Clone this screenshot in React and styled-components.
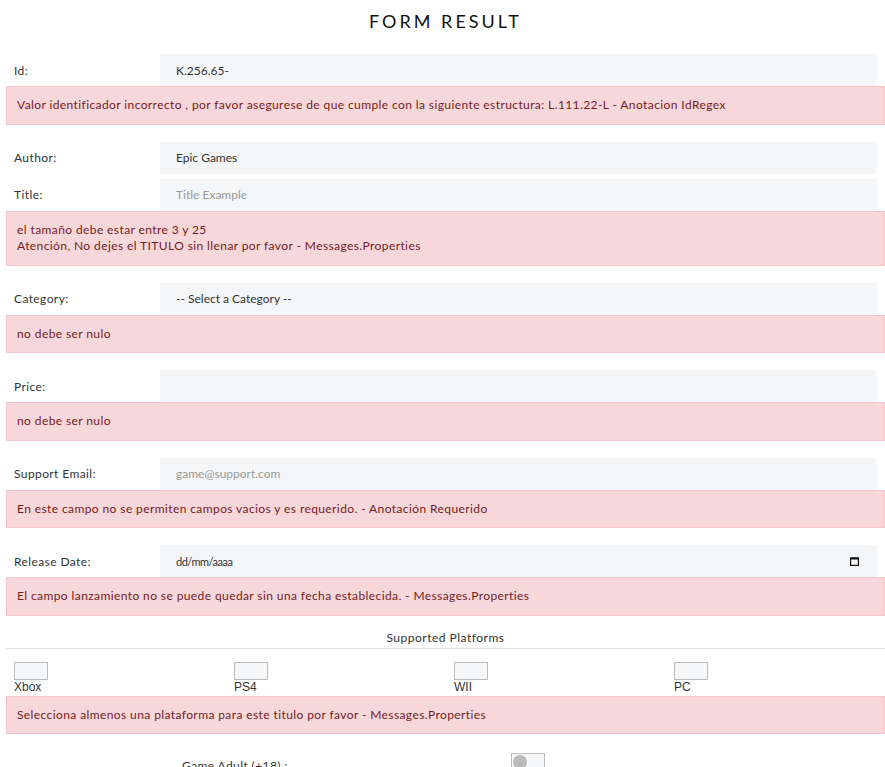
import React from "react";
import styled, { createGlobalStyle } from "styled-components";

const GlobalStyle = createGlobalStyle`
  body {
    margin: 0;
    background: #fff;
    font-family: Lato, "Noto Sans", sans-serif;
    color: #333;
  }
`;

const Page = styled.div`
  padding: 0 0 0 6px;
  overflow: hidden;
`;

const Title = styled.h1`
  margin: 0;
  padding: 9px 0 21px;
  text-align: center;
  font-size: 18px;
  font-weight: 400;
  letter-spacing: 3px;
  color: #111;
  line-height: 24px;
`;

const Row = styled.div`
  display: flex;
  align-items: center;
  height: 32px;
  padding-right: 8px;
  margin-top: ${(p) => p.$gap || 0}px;
`;

const Label = styled.label`
  width: 146px;
  padding-left: 8px;
  font-size: 12px;
  letter-spacing: 0.4px;
`;

const fieldBase = `
  flex: 1;
  height: 32px;
  box-sizing: border-box;
  border: none;
  outline: none;
  background: #f5f6f8;
  padding: 0 16px;
  font-family: Lato, "Noto Sans", sans-serif;
  font-size: 12px;
  color: #333;
`;

const Input = styled.input`
  ${fieldBase}
  &::placeholder {
    color: #9a9a9a;
  }
`;

const Select = styled.select`
  ${fieldBase}
  appearance: none;
`;

const DateField = styled.div`
  ${fieldBase}
  display: flex;
  align-items: center;
  justify-content: space-between;
  padding-right: 18px;
`;

const DateText = styled.span`
  font-size: 11px;
  letter-spacing: -0.5px;
`;

const Alert = styled.div`
  background: #f8d7da;
  border: 1px solid #f5c6cb;
  color: #721c24;
  font-size: 12px;
  letter-spacing: 0.4px;
  line-height: 16.5px;
  padding: 10px 10px;
  margin-bottom: ${(p) => p.$after ?? 17}px;
`;

const SectionTitle = styled.div`
  text-align: center;
  font-size: 12px;
  letter-spacing: 0.5px;
  padding: 14px 0 3px;
  border-bottom: 1px solid #ddd;
`;

const Platforms = styled.div`
  display: grid;
  grid-template-columns: repeat(4, 220px);
  padding: 13px 0 2px 8px;
`;

const Platform = styled.label`
  display: flex;
  flex-direction: column;
  align-items: flex-start;
  font-family: "Liberation Sans", Arial, sans-serif;
  font-size: 12px;
  line-height: 14px;
  color: #333;
`;

const Box = styled.span`
  width: 34px;
  height: 18px;
  box-sizing: border-box;
  border: 1px solid #bbb;
  background: #f5f6f8;
`;

const AdultRow = styled.div`
  display: flex;
  align-items: flex-start;
  padding: 19px 0 0 176px;
  height: 40px;
`;

const AdultLabel = styled.span`
  width: 329px;
  font-size: 12px;
  letter-spacing: 0.4px;
  padding-top: 5px;
`;

const Toggle = styled.span`
  width: 34px;
  height: 18px;
  box-sizing: border-box;
  border: 1px solid #bbb;
  background: #f5f6f8;
  display: flex;
  align-items: center;
  padding-left: 1px;
  &::before {
    content: "";
    width: 14px;
    height: 14px;
    border-radius: 50%;
    background: #bbb;
  }
`;

const CalendarIcon = () => (
  <svg width="9" height="9" viewBox="0 0 9 9">
    <rect x="0.6" y="1" width="7.8" height="7.4" fill="none" stroke="#111" strokeWidth="1.2" />
    <rect x="0.6" y="0.5" width="7.8" height="2" fill="#111" />
  </svg>
);

export default function App() {
  return (
    <Page>
      <GlobalStyle />
      <Title>FORM RESULT</Title>

      <Row>
        <Label>Id:</Label>
        <Input defaultValue="K.256.65-" />
      </Row>
      <Alert>
        Valor identificador incorrecto , por favor asegurese de que cumple con la siguiente estructura: L.111.22-L - Anotacion IdRegex
      </Alert>

      <Row>
        <Label>Author:</Label>
        <Input defaultValue="Epic Games" />
      </Row>
      <Row $gap={5}>
        <Label>Title:</Label>
        <Input placeholder="Title Example" />
      </Row>
      <Alert>
        el tamaño debe estar entre 3 y 25
        <br />
        Atención, No dejes el TITULO sin llenar por favor - Messages.Properties
      </Alert>

      <Row>
        <Label>Category:</Label>
        <Select defaultValue="">
          <option value="">-- Select a Category --</option>
        </Select>
      </Row>
      <Alert>no debe ser nulo</Alert>

      <Row>
        <Label>Price:</Label>
        <Input />
      </Row>
      <Alert>no debe ser nulo</Alert>

      <Row>
        <Label>Support Email:</Label>
        <Input placeholder="game@support.com" />
      </Row>
      <Alert>En este campo no se permiten campos vacios y es requerido. - Anotación Requerido</Alert>

      <Row>
        <Label>Release Date:</Label>
        <DateField>
          <DateText>dd/mm/aaaa</DateText>
          <CalendarIcon />
        </DateField>
      </Row>
      <Alert $after={0}>
        El campo lanzamiento no se puede quedar sin una fecha establecida. - Messages.Properties
      </Alert>

      <SectionTitle>Supported Platforms</SectionTitle>
      <Platforms>
        {["Xbox", "PS4", "WII", "PC"].map((name) => (
          <Platform key={name}>
            <Box />
            {name}
          </Platform>
        ))}
      </Platforms>
      <Alert $after={0}>
        Selecciona almenos una plataforma para este titulo por favor - Messages.Properties
      </Alert>

      <AdultRow>
        <AdultLabel>Game Adult (+18) :</AdultLabel>
        <Toggle />
      </AdultRow>
    </Page>
  );
}
